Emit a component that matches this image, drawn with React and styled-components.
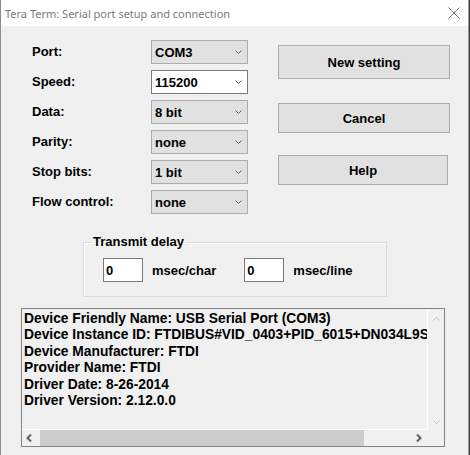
import styled, { createGlobalStyle } from 'styled-components';

const GlobalStyle = createGlobalStyle`
  html, body {
    margin: 0;
    padding: 0;
    background: #3c3c3c;
  }
  * {
    box-sizing: border-box;
  }
`;

const Window = styled.div`
  width: 469px;
  height: 455px;
  background: #f0f0f0;
  border-left: 1px solid #8c8c8c;
  border-right: 1px solid #9c9c9c;
  display: flex;
  flex-direction: column;
  font-family: "Liberation Sans", Arial, sans-serif;
  font-weight: bold;
  font-size: 13px;
  color: #000;
`;

const TitleBar = styled.div`
  height: 26px;
  background: #fff;
  display: flex;
  align-items: center;
  justify-content: space-between;
  padding: 0 8px 0 4px;
  font-family: "Noto Sans", sans-serif;
  font-weight: normal;
  font-size: 11px;
  color: #7a7a7a;
`;

const Top = styled.div`
  display: flex;
  padding: 14px 0 0 31px;
`;

const Form = styled.div`
  display: grid;
  grid-template-columns: 119px 97px;
  grid-auto-rows: 24px;
  row-gap: 6px;
  align-items: center;
`;

const Label = styled.div`
  line-height: 16px;
`;

const Combo = styled.div`
  height: 24px;
  display: flex;
  align-items: center;
  justify-content: space-between;
  padding: 0 5px 0 3px;
  background: ${p => (p.$editable ? '#fff' : '#e1e1e1')};
  border: 1px solid ${p => (p.$editable ? '#7a7a7a' : '#adadad')};
`;

const Buttons = styled.div`
  display: flex;
  flex-direction: column;
  align-items: flex-start;
  margin-left: 30px;
  padding-top: 5px;
`;

const Button = styled.button`
  width: ${p => p.$w || 172}px;
  height: ${p => p.$h || 30}px;
  margin-top: ${p => p.$mt || 0}px;
  background: #e1e1e1;
  border: 1px solid #adadad;
  font: inherit;
  color: #000;
  padding: 0;
`;

const Group = styled.fieldset`
  margin: 20px 0 0 82px;
  width: 304px;
  padding: 0 0 14px 19px;
  border: 1px solid #dcdcdc;
  box-shadow: inset 1px 1px 0 #fff;
`;

const Legend = styled.legend`
  margin-left: -12px;
  padding: 0 2px;
  line-height: 16px;
`;

const DelayRow = styled.div`
  display: flex;
  align-items: center;
  margin-top: 8px;
`;

const NumInput = styled.input`
  width: 40px;
  height: 24px;
  border: 1px solid #7a7a7a;
  background: #fff;
  font: inherit;
  color: #000;
  padding: 0 0 0 2px;
  margin-right: ${p => p.$mr || 9}px;
  outline: none;
`;

const Unit = styled.span`
  margin-right: ${p => p.$mr || 0}px;
`;

const InfoBox = styled.div`
  margin: 11px 0 0 20px;
  width: 424px;
  height: 139px;
  border: 1px solid #828282;
  display: grid;
  grid-template-columns: 1fr 16px;
  grid-template-rows: 1fr 16px;
`;

const InfoText = styled.div`
  padding: 2px 0 0 2px;
  font-size: 13.8px;
  line-height: 16.4px;
  white-space: nowrap;
  overflow: hidden;
  border-right: 1px solid #fff;
  border-bottom: 1px solid #fff;
`;

const VScroll = styled.div`
  display: flex;
  flex-direction: column;
  justify-content: space-between;
  align-items: center;
  padding: 8px 0 6px;
`;

const HScroll = styled.div`
  display: flex;
  align-items: center;
  padding: 0 6px 0 4px;
`;

const Thumb = styled.div`
  width: 324px;
  height: 16px;
  margin-left: 8px;
  background: #cdcdcd;
`;

const Spacer = styled.div`
  flex: 1;
`;

const Chevron = ({ dir = 'down', color = '#606060' }) => {
  const d = {
    down: 'M0.5 0.5 L3.5 3.5 L6.5 0.5',
    up: 'M0.5 3.5 L3.5 0.5 L6.5 3.5',
  }[dir];
  return (
    <svg width="7" height="4" viewBox="0 0 7 4">
      <path d={d} fill="none" stroke={color} strokeWidth="1" />
    </svg>
  );
};

const Arrow = ({ dir }) => (
  <svg width="6" height="8" viewBox="0 0 6 8">
    <path
      d={dir === 'left' ? 'M5 0.5 L1.5 4 L5 7.5' : 'M1 0.5 L4.5 4 L1 7.5'}
      fill="none"
      stroke="#606060"
      strokeWidth="2"
    />
  </svg>
);

const fields = [
  { label: 'Port:', value: 'COM3' },
  { label: 'Speed:', value: '115200', editable: true },
  { label: 'Data:', value: '8 bit' },
  { label: 'Parity:', value: 'none' },
  { label: 'Stop bits:', value: '1 bit' },
  { label: 'Flow control:', value: 'none' },
];

const info = [
  'Device Friendly Name: USB Serial Port (COM3)',
  'Device Instance ID: FTDIBUS#VID_0403+PID_6015+DN034L9SA\\0000',
  'Device Manufacturer: FTDI',
  'Provider Name: FTDI',
  'Driver Date: 8-26-2014',
  'Driver Version: 2.12.0.0',
];

export default function App() {
  return (
    <>
      <GlobalStyle />
      <Window>
        <TitleBar>
          <span>Tera Term: Serial port setup and connection</span>
          <svg width="12" height="12" viewBox="0 0 12 12">
            <path d="M0.5 0.5 L11.5 11.5 M11.5 0.5 L0.5 11.5" stroke="#7a7a7a" strokeWidth="1" />
          </svg>
        </TitleBar>
        <Top>
          <Form>
            {fields.map(f => [
              <Label key={f.label}>{f.label}</Label>,
              <Combo key={f.label + 'c'} $editable={f.editable}>
                <span>{f.value}</span>
                <Chevron />
              </Combo>,
            ])}
          </Form>
          <Buttons>
            <Button $h={34}>New setting</Button>
            <Button $mt={24}>Cancel</Button>
            <Button $mt={22} $w={170}>Help</Button>
          </Buttons>
        </Top>
        <Group>
          <Legend>Transmit delay</Legend>
          <DelayRow>
            <NumInput readOnly value="0" />
            <Unit $mr={28}>msec/char</Unit>
            <NumInput readOnly value="0" />
            <Unit>msec/line</Unit>
          </DelayRow>
        </Group>
        <InfoBox>
          <InfoText>
            {info.map(line => (
              <div key={line}>{line}</div>
            ))}
          </InfoText>
          <VScroll>
            <Chevron dir="up" color="#c0c0c0" />
            <Chevron color="#c0c0c0" />
          </VScroll>
          <HScroll>
            <Arrow dir="left" />
            <Thumb />
            <Spacer />
            <Arrow dir="right" />
          </HScroll>
          <div />
        </InfoBox>
      </Window>
    </>
  );
}
